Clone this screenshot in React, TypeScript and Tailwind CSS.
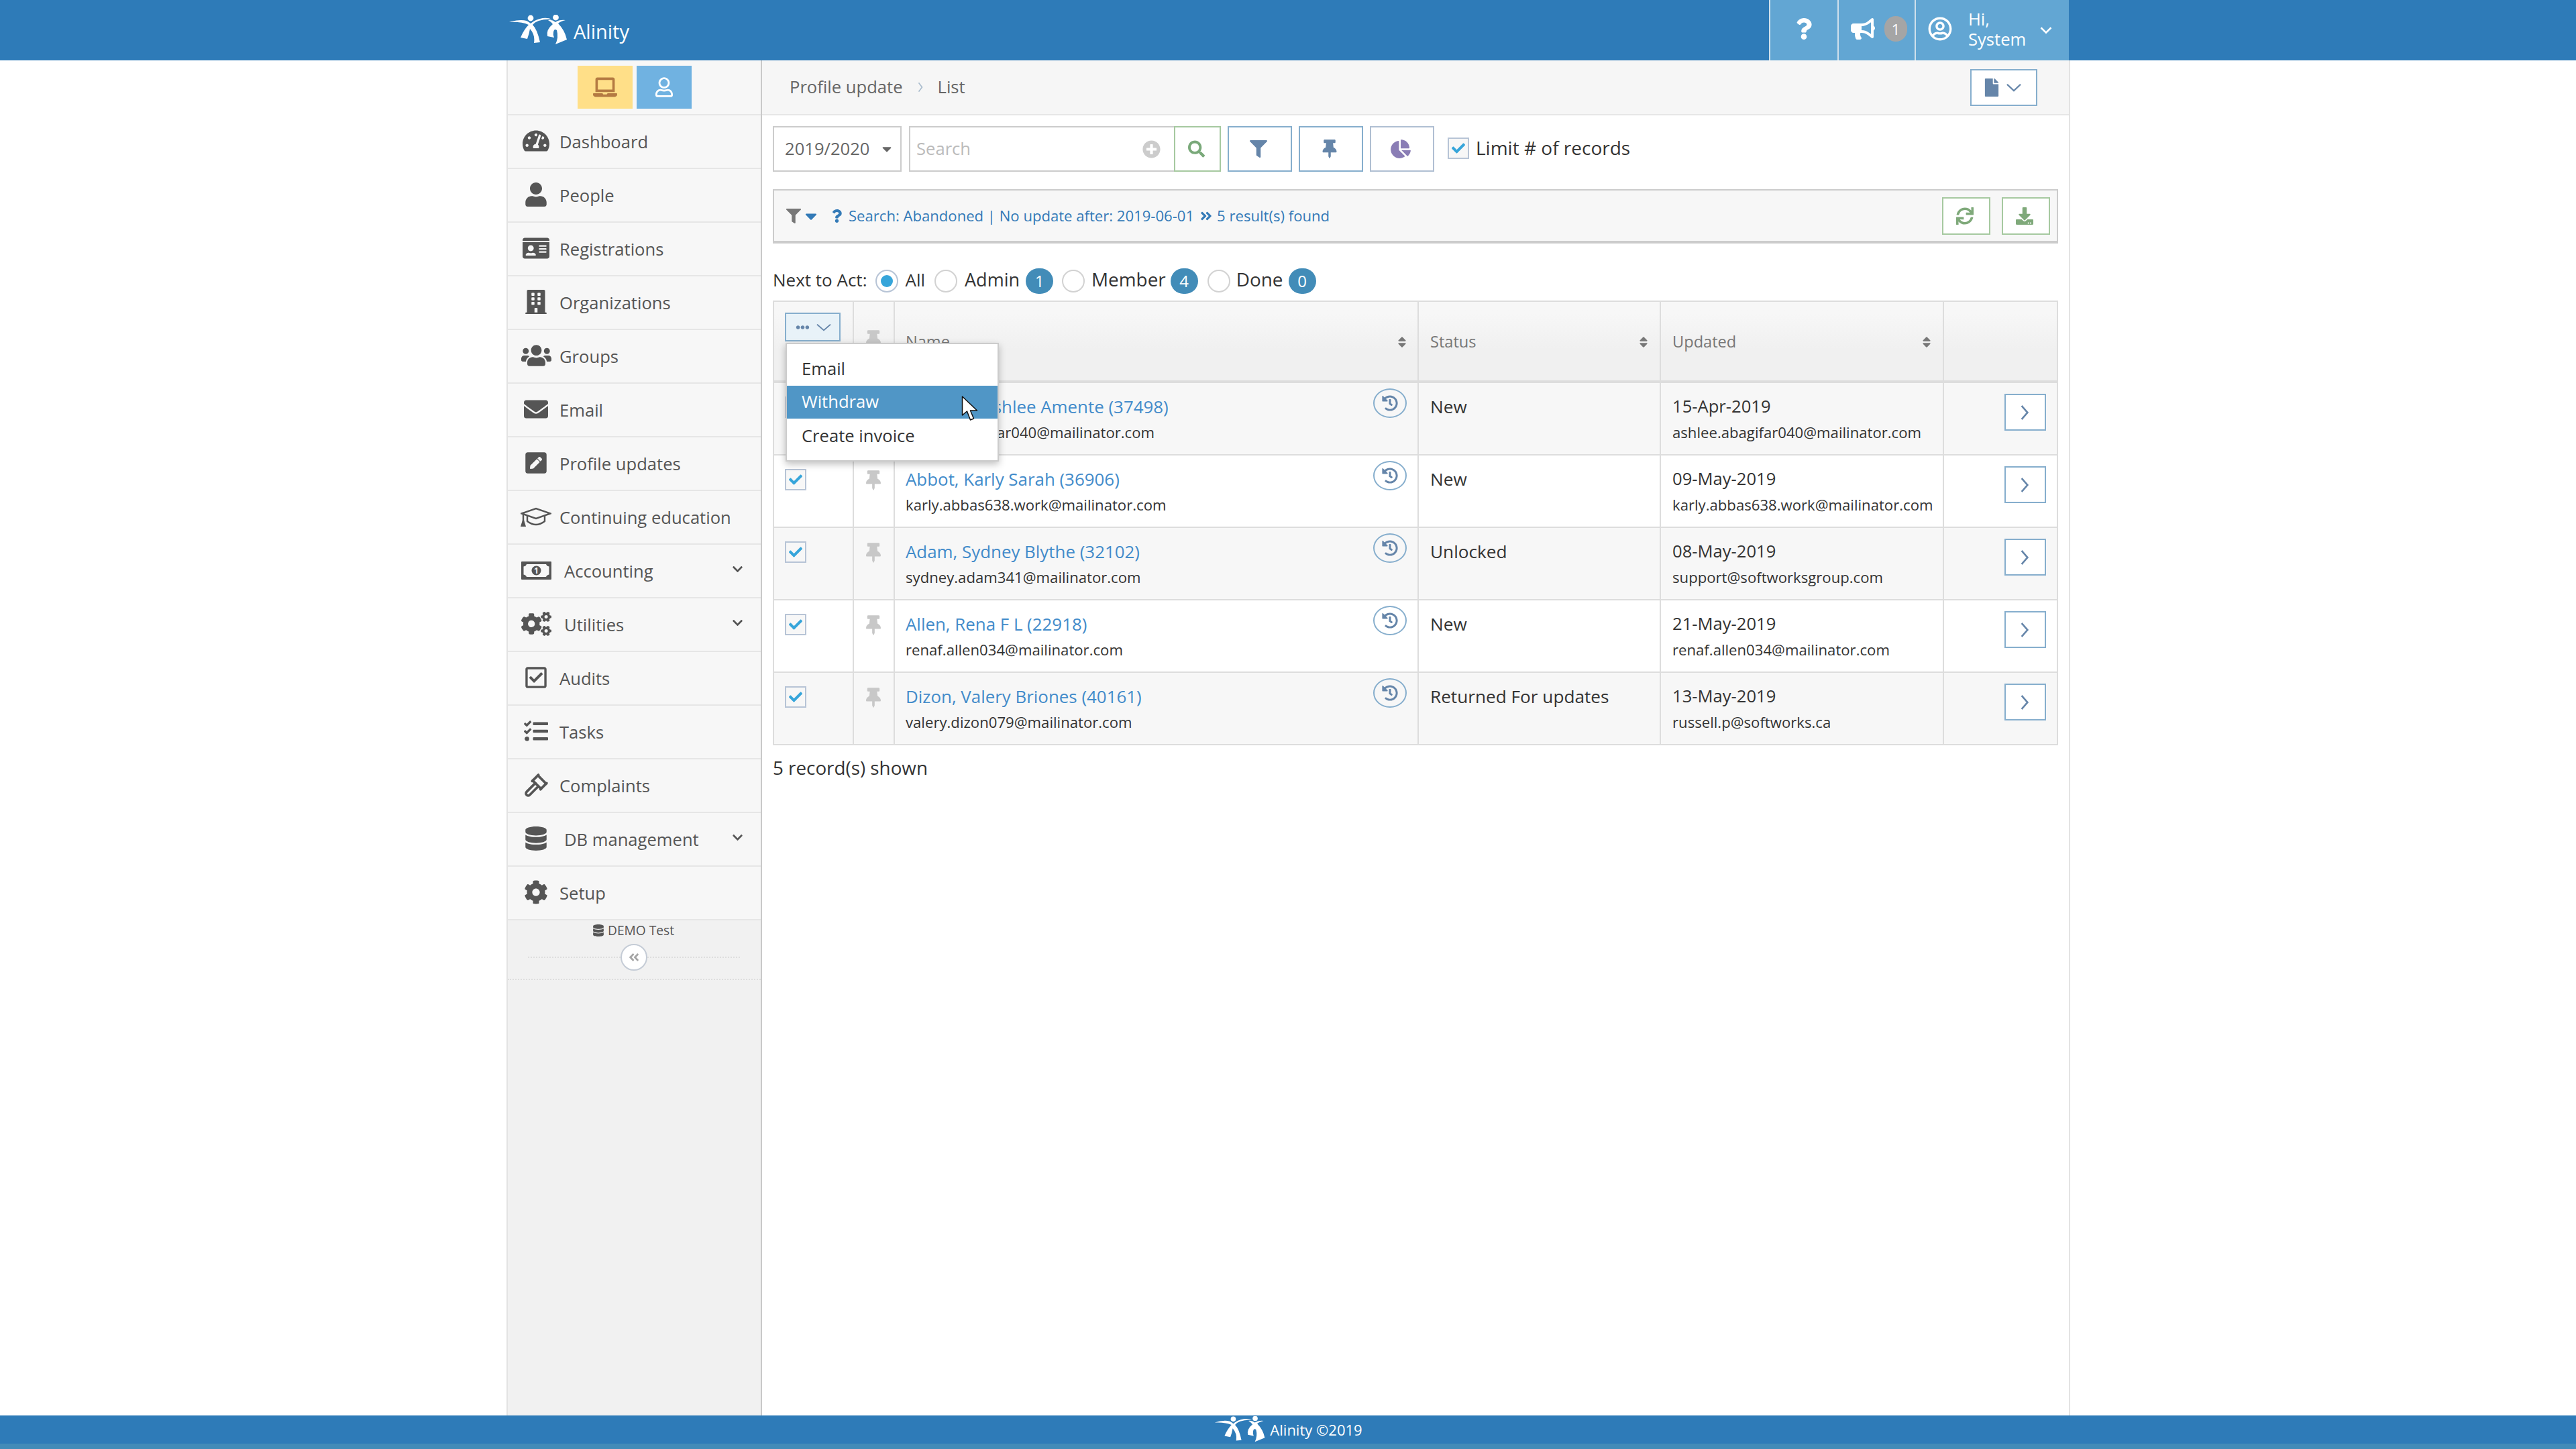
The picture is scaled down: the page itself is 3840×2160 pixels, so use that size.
import React from "react";
import {
  FaTachometerAlt, FaUser, FaIdCard, FaBuilding, FaUsers, FaEnvelope, FaPenSquare, FaCogs, FaRegCheckSquare,
  FaTasks, FaDatabase, FaCog, FaChevronDown, FaAngleDoubleLeft, FaAngleDoubleRight, FaFilter, FaThumbtack,
  FaChartPie, FaHistory, FaQuestion, FaBullhorn, FaFile, FaSync, FaDownload, FaSearch, FaPlusCircle, FaCheck,
  FaCaretDown, FaSort, FaEllipsisH, FaLaptop, FaRegUser, FaRegUserCircle,
} from "react-icons/fa";
import { Gavel } from "lucide-react";

function Logo({ className }: { className: string }) {
  return (
    <svg viewBox="7 10 88 46" className={className} fill="#fff">
      <circle cx="40" cy="15" r="4.4" />
      <circle cx="77.5" cy="14" r="4.4" />
      <path d="M8 21 Q24 16 34 19 Q38 21 40 23 Q47 17 58 15 Q66 14 72 17 Q62 16 52 19 Q46 21 43 25 Q50 32 54 51 L45 52 Q47 40 39 31 Q38 38 35 46 L25 44 Q30 32 37 25 Q26 20 8 21 Z" />
      <path d="M66 18 Q72 17 77 21 Q83 17 92 18 Q84 20 81 23 Q91 33 94 47 L77 54 Q82 44 79 33 Q75 30 74 36 Q73 40 75 44 L65 42 Q63 32 73 24 Q70 20 66 18 Z" />
    </svg>
  );
}

function Chev({ className, dir = "down", sw = 2 }: { className: string; dir?: "down" | "right" | "left"; sw?: number }) {
  const pts = dir === "down" ? "2,3 12,13 22,3" : dir === "right" ? "3,2 13,12 3,22" : "13,2 3,12 13,22";
  const vb = dir === "down" ? "0 0 24 16" : "0 0 16 24";
  return (
    <svg viewBox={vb} preserveAspectRatio="none" className={className} fill="none" stroke="currentColor" strokeWidth={sw}>
      <polyline points={pts} />
    </svg>
  );
}

function GradCap() {
  return (
    <svg viewBox="0 0 46 29" className="w-[46px] h-[29px]" fill="none" stroke="#555" strokeWidth="2.4">
      <path d="M1.5 9.5 L23 2 L44.5 9.5 L23 17 Z" />
      <path d="M10 13 V21 Q23 31 36 21 V13" />
      <path d="M4 10 V22" />
      <path d="M1.5 28 L4 20 L6.5 28 Z" fill="#555" />
    </svg>
  );
}

function Money() {
  return (
    <svg viewBox="0 0 45 27" className="w-[45px] h-[27px]">
      <path fillRule="evenodd" fill="#555" d="M1 0 H44 Q45 0 45 1 V26 Q45 27 44 27 H1 Q0 27 0 26 V1 Q0 0 1 0 Z M8 4 Q7 7 3.5 7.5 V19.5 Q7 20 8 23 H37 Q38 20 41.5 19.5 V7.5 Q38 7 37 4 Z" />
      <circle cx="22.5" cy="13.5" r="7" fill="#555" />
      <text x="22.5" y="18" textAnchor="middle" fill="#f7f7f7" fontSize="12" fontWeight="700" fontFamily="Open Sans">1</text>
    </svg>
  );
}

const navItems: { label: string; icon: React.ReactNode; chev?: boolean }[] = [
  { label: "Dashboard", icon: <FaTachometerAlt className="w-[40px] h-[36px]" /> },
  { label: "People", icon: <FaUser className="w-[32px] h-[36px]" /> },
  { label: "Registrations", icon: <FaIdCard className="w-[40px] h-[36px]" /> },
  { label: "Organizations", icon: <FaBuilding className="w-[32px] h-[36px]" /> },
  { label: "Groups", icon: <FaUsers className="w-[45px] h-[36px]" /> },
  { label: "Email", icon: <FaEnvelope className="w-[36px] h-[36px]" /> },
  { label: "Profile updates", icon: <FaPenSquare className="w-[36px] h-[36px]" /> },
  { label: "Continuing education", icon: <GradCap /> },
  { label: "Accounting", icon: <Money />, chev: true },
  { label: "Utilities", icon: <FaCogs className="w-[45px] h-[36px]" />, chev: true },
  { label: "Audits", icon: <FaRegCheckSquare className="w-[36px] h-[36px]" /> },
  { label: "Tasks", icon: <FaTasks className="w-[36px] h-[36px]" /> },
  { label: "Complaints", icon: <Gavel className="w-[37px] h-[37px]" strokeWidth={2.4} /> },
  { label: "DB management", icon: <FaDatabase className="w-[32px] h-[36px]" />, chev: true },
  { label: "Setup", icon: <FaCog className="w-[36px] h-[36px]" /> },
];

function Sidebar() {
  return (
    <aside className="w-[381px] shrink-0 flex flex-col bg-[#f1f1f1] border-l-2 border-r-2 border-l-[#e3e3e3] border-r-[#c9c9c9] text-[#555]">
      <div className="h-[82px] bg-[#f7f7f7] border-b-2 border-[#e6e6e6] flex justify-center gap-[6px] pt-[8px]">
        <div className="w-[82px] h-[64px] bg-[#ffdf88] text-[#b47a42] flex items-center justify-center">
          <FaLaptop className="w-[36px] h-[30px]" />
        </div>
        <div className="w-[82px] h-[64px] bg-[#70b2e1] text-white flex items-center justify-center">
          <FaRegUser className="w-[26px] h-[30px]" />
        </div>
      </div>
      {navItems.map((n) => (
        <div key={n.label} className="h-[80px] bg-[#f7f7f7] border-b-2 border-[#e6e6e6] flex items-center pl-[7px] pr-[26px]">
          <div className="w-[70px] flex justify-center items-center shrink-0 pb-[2px]">{n.icon}</div>
          <span className={n.chev ? "text-[25.6px] ml-[7px] pt-[3px]" : "text-[25.6px] pt-[3px]"}>{n.label}</span>
          {n.chev && <FaChevronDown className="ml-auto w-[17px] h-[17px] mb-[6px]" />}
        </div>
      ))}
      <div className="h-[89px] border-b-2 border-dotted border-[#ddd] flex flex-col items-center pr-[2px]">
        <div className="flex items-center gap-[6px] text-[19.2px] h-[30px]">
          <FaDatabase className="w-[16px] h-[18px]" />
          <span>DEMO Test</span>
        </div>
        <div className="flex items-center w-[316px] mt-[5px]">
          <div className="flex-1 border-t-2 border-dotted border-[#ddd]" />
          <div className="w-[40px] h-[40px] rounded-full bg-white border-2 border-[#c5ccd6] flex items-center justify-center text-[#a5a5a5]">
            <FaAngleDoubleLeft className="w-[18px] h-[18px]" />
          </div>
          <div className="flex-1 border-t-2 border-dotted border-[#ddd]" />
        </div>
      </div>
    </aside>
  );
}

function Btn({ w, border, children }: { w: string; border: string; children: React.ReactNode }) {
  return <div className={`${w} ${border} h-[68px] border-2 bg-white flex items-center justify-center pr-[4px] shrink-0`}>{children}</div>;
}

function Check() {
  return (
    <div className="w-[32px] h-[32px] border-2 border-[#b7c4d6] bg-[#f7f7f7] flex items-center justify-center shrink-0">
      <FaCheck className="w-[22px] h-[20px] text-[#36a5da]" />
    </div>
  );
}

function Radio({ on }: { on?: boolean }) {
  return (
    <div className={`w-[34px] h-[34px] rounded-full border-2 ${on ? "border-[#b7c4d6]" : "border-[#d2d2d2]"} bg-white flex items-center justify-center shrink-0`}>
      {on && <div className="w-[18px] h-[18px] rounded-full bg-[#36a5da]" />}
    </div>
  );
}

function Badge({ n }: { n: number }) {
  return <div className="w-[41px] h-[38px] rounded-full bg-[#428cb8] text-white text-[24px] flex items-center justify-center shrink-0">{n}</div>;
}

const rows = [
  { name: "Abagifar, Ashlee Amente (37498)", email: "ashlee.abagifar040@mailinator.com", status: "New", date: "15-Apr-2019", by: "ashlee.abagifar040@mailinator.com" },
  { name: "Abbot, Karly Sarah (36906)", email: "karly.abbas638.work@mailinator.com", status: "New", date: "09-May-2019", by: "karly.abbas638.work@mailinator.com" },
  { name: "Adam, Sydney Blythe (32102)", email: "sydney.adam341@mailinator.com", status: "Unlocked", date: "08-May-2019", by: "support@softworksgroup.com" },
  { name: "Allen, Rena F L (22918)", email: "renaf.allen034@mailinator.com", status: "New", date: "21-May-2019", by: "renaf.allen034@mailinator.com" },
  { name: "Dizon, Valery Briones (40161)", email: "valery.dizon079@mailinator.com", status: "Returned For updates", date: "13-May-2019", by: "russell.p@softworks.ca" },
];

function Table() {
  return (
    <div className="relative mt-[10px] w-[1916px]">
      <div className="flex h-[123px] border-t-2 border-b-4 border-x-2 border-[#ddd] bg-gradient-to-b from-[#f7f7f7] from-15% to-[#f0f0f0] to-60% text-[#777] text-[23.6px]">
        <div className="w-[119px] shrink-0 border-r-2 border-[#ddd] pl-[16px] pt-[16px]">
          <div className="w-[83px] h-[43px] border-2 border-[#86aecd] bg-[#e8f2f8] flex items-center justify-center gap-[6px] text-[#6585a9]">
            <FaEllipsisH className="w-[27px] h-[20px]" />
            <Chev className="w-[24px] h-[14px]" />
          </div>
        </div>
        <div className="w-[61px] shrink-0 border-r-2 border-[#ddd] flex justify-center pt-[42px] pr-[2px] text-[#c8c8c8]">
          <FaThumbtack className="w-[22px] h-[30px]" />
        </div>
        <div className="w-[781px] shrink-0 border-r-2 border-[#ddd] flex items-center justify-between pl-[16px] pr-[16px] pt-[2px]">
          <span>Name</span><FaSort className="w-[14px] h-[20px]" />
        </div>
        <div className="w-[361px] shrink-0 border-r-2 border-[#ddd] flex items-center justify-between pl-[17px] pr-[17px] pt-[2px]">
          <span>Status</span><FaSort className="w-[14px] h-[20px]" />
        </div>
        <div className="w-[422px] shrink-0 border-r-2 border-[#ddd] flex items-center justify-between pl-[17px] pr-[17px] pt-[2px]">
          <span>Updated</span><FaSort className="w-[14px] h-[20px]" />
        </div>
        <div className="flex-1" />
      </div>
      {rows.map((r, i) => (
        <div key={r.name} className={`flex h-[108px] border-x-2 border-b-2 border-[#ddd] text-[#333] ${i % 2 === 0 ? "bg-[#f7f7f7]" : "bg-white"}`}>
          <div className="w-[119px] shrink-0 border-r-2 border-[#ddd] pl-[16px] pt-[20px]"><Check /></div>
          <div className="w-[61px] shrink-0 border-r-2 border-[#ddd] flex justify-center pt-[22px] pr-[2px] text-[#c8c8c8]">
            <FaThumbtack className="w-[22px] h-[30px]" />
          </div>
          <div className="w-[781px] shrink-0 border-r-2 border-[#ddd] flex justify-between pl-[16px] pr-[16px]">
            <div>
              <div className="text-[25.9px] leading-[38px] mt-[16px] text-[#428bca]">{r.name}</div>
              <div className="text-[22.15px] leading-[38px]">{r.email}</div>
            </div>
            <div className="w-[50px] h-[44px] rounded-[50%] border-2 border-[#86aecd] flex items-center justify-center text-[#6585a9] mt-[8px]">
              <FaHistory className="w-[24px] h-[26px]" />
            </div>
          </div>
          <div className="w-[361px] shrink-0 border-r-2 border-[#ddd] pl-[17px]">
            <div className="text-[26.2px] leading-[38px] mt-[16px]">{r.status}</div>
          </div>
          <div className="w-[422px] shrink-0 border-r-2 border-[#ddd] pl-[17px]">
            <div className="text-[25.6px] leading-[38px] mt-[16px]">{r.date}</div>
            <div className="text-[22.15px] leading-[38px]">{r.by}</div>
          </div>
          <div className="flex-1 flex justify-end pr-[16px] pt-[16px]">
            <div className="w-[62px] h-[55px] border-2 border-[#86aecd] bg-white flex items-center justify-center pr-[3px] text-[#6585a9]">
              <Chev dir="right" className="w-[14px] h-[24px]" sw={2.8} />
            </div>
          </div>
        </div>
      ))}
      <div className="absolute left-[19px] top-[63px] w-[318px] h-[177px] bg-white border-2 border-[#ccc] shadow-[0_4px_10px_rgba(0,0,0,0.25)] text-[25.6px] text-[#333] pt-[13px] z-10">
        <div className="h-[49px] pl-[22px] flex items-center">Email</div>
        <div className="h-[49px] pl-[22px] flex items-center bg-[#5096c6] text-white">Withdraw</div>
        <div className="h-[53px] pl-[22px] flex items-center">Create invoice</div>
      </div>
      <svg viewBox="0 0 24 38" className="absolute left-[281px] top-[142px] w-[25px] h-[38px] z-20">
        <path d="M1 1 V29 L8 23 L13 36 L18 34 L13 22 L23 22 Z" fill="#fff" stroke="#111" strokeWidth="1.5" strokeLinejoin="round" />
      </svg>
    </div>
  );
}

function Main() {
  return (
    <main className="w-[1950px] shrink-0 border-r-2 border-[#e3e3e3] bg-white flex flex-col">
      <div className="h-[82px] bg-[#f6f6f6] border-b-2 border-[#e6e6e6] flex items-center pl-[41px] pr-[47px] text-[25.6px] text-[#666]">
        <span>Profile update</span>
        <Chev dir="right" className="w-[8px] h-[16px] mx-[22px] text-[#a9bccd]" sw={3} />
        <span>List</span>
        <div className="ml-auto w-[100px] h-[55px] border-2 border-[#86aecd] bg-white flex items-center justify-center gap-[9px] pr-[4px] text-[#6585a9]">
          <FaFile className="w-[24px] h-[27px]" />
          <Chev className="w-[24px] h-[15px]" sw={2.4} />
        </div>
      </div>
      <div className="pl-[16px] pt-[16px] flex flex-col">
        <div className="flex items-center h-[68px]">
          <div className="w-[192px] h-[68px] border-2 border-[#ccc] bg-white flex items-center justify-between pl-[16px] pr-[11px] text-[25.6px] text-[#666] shrink-0">
            <span>2019/2020</span>
            <FaCaretDown className="w-[18px] h-[22px]" />
          </div>
          <div className="ml-[11px] w-[395px] h-[68px] border-2 border-r-0 border-[#ccc] bg-white flex items-center justify-between pl-[9px] pr-[20px] text-[25.6px] text-[#bbb] shrink-0">
            <span>Search</span>
            <FaPlusCircle className="w-[27px] h-[27px] text-[#ccc]" />
          </div>
          <Btn w="w-[70px]" border="border-[#a6c9a0]"><FaSearch className="w-[25px] h-[26px] text-[#7aa97a]" /></Btn>
          <div className="ml-[10px]"><Btn w="w-[96px]" border="border-[#86aecd]"><FaFilter className="w-[26px] h-[26px] text-[#6585a9]" /></Btn></div>
          <div className="ml-[10px]"><Btn w="w-[96px]" border="border-[#86aecd]"><FaThumbtack className="w-[22px] h-[28px] text-[#6585a9]" /></Btn></div>
          <div className="ml-[10px]"><Btn w="w-[96px]" border="border-[#b0bfd2]"><FaChartPie className="w-[30px] h-[28px] text-[#8a7db5]" /></Btn></div>
          <div className="ml-[20px] mb-[2px]"><Check /></div>
          <span className="ml-[10px] mb-[4px] text-[28px] text-[#333]">Limit # of records</span>
        </div>
        <div className="mt-[26px] w-[1916px] h-[81px] bg-[#f7f7f7] border-2 border-b-4 border-[#ccc] flex items-center pl-[18px] pr-[10px] text-[22.1px] text-[#337ab7]">
          <FaFilter className="w-[22px] h-[22px] text-[#777]" />
          <FaCaretDown className="w-[22px] h-[28px] ml-[4px]" />
          <FaQuestion className="w-[15px] h-[22px] ml-[20px]" />
          <span className="ml-[10px]">Search: Abandoned | No update after: 2019-06-01</span>
          <FaAngleDoubleRight className="w-[18px] h-[20px] ml-[9px]" />
          <span className="ml-[7px]">5 result(s) found</span>
          <div className="ml-auto h-[56px] w-[72px] border-2 border-[#a6c9a0] bg-white flex items-center justify-center pr-[4px] text-[#7fa97a] shrink-0">
            <FaSync className="w-[26px] h-[26px]" />
          </div>
          <div className="ml-[17px] h-[56px] w-[72px] border-2 border-[#a6c9a0] bg-white flex items-center justify-center pr-[4px] text-[#7fa97a] shrink-0">
            <FaDownload className="w-[26px] h-[26px]" />
          </div>
        </div>
        <div className="mt-[37px] h-[38px] flex items-center text-[#333]">
          <span className="text-[26px] pb-[4px]">Next to Act:</span>
          <div className="ml-[13px]"><Radio on /></div>
          <span className="ml-[10px] text-[26px] pb-[4px]">All</span>
          <div className="ml-[14px]"><Radio /></div>
          <span className="ml-[11px] text-[27px] pb-[4px]">Admin</span>
          <div className="ml-[9px]"><Badge n={1} /></div>
          <div className="ml-[13px]"><Radio /></div>
          <span className="ml-[10px] text-[27.9px] pb-[4px]">Member</span>
          <div className="ml-[7px]"><Badge n={4} /></div>
          <div className="ml-[14px]"><Radio /></div>
          <span className="ml-[9px] text-[27.9px] pb-[4px]">Done</span>
          <div className="ml-[8px]"><Badge n={0} /></div>
        </div>
        <Table />
        <div className="mt-[16px] text-[27.8px] leading-[34px] text-[#333]">5 record(s) shown</div>
      </div>
    </main>
  );
}

export default function App() {
  return (
    <div className="w-[3840px] h-[2160px] flex flex-col bg-white font-['Open_Sans',sans-serif] overflow-hidden">
      <header className="h-[90px] shrink-0 bg-[#2e7bb8] flex items-stretch pl-[758px] pr-[756px] text-white">
        <div className="flex items-center">
          <Logo className="w-[88px] h-[46px]" />
          <span className="ml-[9px] pt-[3px] text-[29px]">Alinity</span>
        </div>
        <div className="ml-auto flex bg-[#62a6d3]">
          <div className="w-[102px] border-l-2 border-[#cfe0ec] flex items-center justify-center pb-[4px]">
            <FaQuestion className="w-[24px] h-[34px]" />
          </div>
          <div className="w-[115px] border-l-2 border-[#cfe0ec] flex items-center pl-[18px] pb-[4px]">
            <FaBullhorn className="w-[36px] h-[34px]" />
            <div className="ml-[14px] w-[34px] h-[38px] rounded-full bg-[#a5a5a5] flex items-center justify-center text-[22px]">1</div>
          </div>
          <div className="w-[230px] border-l-2 border-[#cfe0ec] flex items-center pl-[16px]">
            <FaRegUserCircle className="w-[40px] h-[36px] mb-[4px]" />
            <div className="ml-[22px] text-[25.6px] leading-[30px] pb-[2px]">
              <div>Hi,</div>
              <div>System</div>
            </div>
            <Chev className="w-[18px] h-[12px] ml-[21px]" sw={3.5} />
          </div>
        </div>
      </header>
      <div className="flex-1 min-h-0 flex pl-[755px]">
        <Sidebar />
        <Main />
      </div>
      <footer className="h-[50px] shrink-0 bg-[#2e7bb8] border-b-[8px] border-[#428bb8] flex items-center justify-center text-white text-[22px]">
        <Logo className="w-[78px] h-[40px]" />
        <span className="ml-[6px]">Alinity ©2019</span>
      </footer>
    </div>
  );
}
